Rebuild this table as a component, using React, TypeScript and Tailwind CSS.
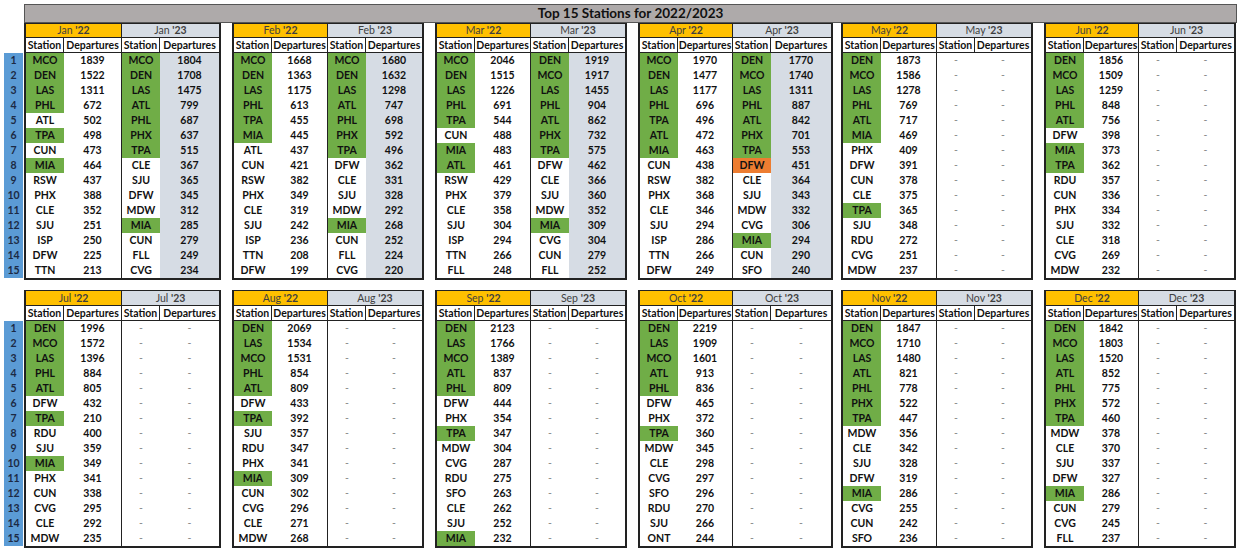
import React from "react";

const D: Record<string, string> = {
  Jan22: "MCO*1839 DEN*1522 LAS*1311 PHL*672 ATL502 TPA*498 CUN473 MIA*464 RSW437 PHX388 CLE352 SJU251 ISP250 DFW225 TTN213",
  Jan23: "MCO*1804 DEN*1708 LAS*1475 ATL*799 PHL*687 PHX*637 TPA*515 CLE367 SJU365 DFW345 MDW312 MIA*285 CUN279 FLL249 CVG234",
  Feb22: "MCO*1668 DEN*1363 LAS*1175 PHL*613 TPA*455 MIA*445 ATL437 CUN421 RSW382 PHX349 CLE319 SJU242 ISP236 TTN208 DFW199",
  Feb23: "MCO*1680 DEN*1632 LAS*1298 ATL*747 PHL*698 PHX*592 TPA*496 DFW362 CLE331 SJU328 MDW292 MIA*268 CUN252 FLL224 CVG220",
  Mar22: "MCO*2046 DEN*1515 LAS*1226 PHL*691 TPA*544 CUN488 MIA*483 ATL*461 RSW429 PHX379 CLE358 SJU304 ISP294 TTN266 FLL248",
  Mar23: "DEN*1919 MCO*1917 LAS*1455 PHL*904 ATL*862 PHX*732 TPA*575 DFW462 CLE366 SJU360 MDW352 MIA*309 CVG304 CUN279 FLL252",
  Apr22: "MCO*1970 DEN*1477 LAS*1177 PHL*696 TPA*496 ATL*472 MIA*463 CUN438 RSW382 PHX368 CLE346 SJU294 ISP286 TTN266 DFW249",
  Apr23: "DEN*1770 MCO*1740 LAS*1311 PHL*887 ATL*842 PHX*701 TPA*553 DFW!451 CLE364 SJU343 MDW332 CVG306 MIA*294 CUN290 SFO240",
  May22: "DEN*1873 MCO*1586 LAS*1278 PHL*769 ATL*717 MIA*469 PHX409 DFW391 CUN378 CLE375 TPA*365 SJU348 RDU272 CVG251 MDW237",
  Jun22: "DEN*1856 MCO*1509 LAS*1259 PHL*848 ATL*756 DFW398 MIA*373 TPA*362 RDU357 CUN336 PHX334 SJU332 CLE318 CVG269 MDW232",
  Jul22: "DEN*1996 MCO*1572 LAS*1396 PHL*884 ATL*805 DFW432 TPA*210 RDU400 SJU359 MIA*349 PHX341 CUN338 CVG295 CLE292 MDW235",
  Aug22: "DEN*2069 LAS*1534 MCO*1531 PHL*854 ATL*809 DFW433 TPA*392 SJU357 RDU347 PHX341 MIA*309 CUN302 CVG296 CLE271 MDW268",
  Sep22: "DEN*2123 LAS*1766 MCO*1389 ATL*837 PHL*809 DFW444 PHX354 TPA*347 MDW304 CVG287 RDU275 SFO263 CLE262 SJU252 MIA*232",
  Oct22: "DEN*2219 LAS*1909 MCO*1601 ATL*913 PHL*836 DFW465 PHX372 TPA*360 MDW345 CLE298 CVG297 SFO296 RDU270 SJU266 ONT244",
  Nov22: "DEN*1847 MCO*1710 LAS*1480 ATL*821 PHL*778 PHX*522 TPA*447 MDW356 CLE342 SJU328 DFW319 MIA*286 CVG255 CUN242 SFO236",
  Dec22: "DEN*1842 MCO*1803 LAS*1520 ATL*852 PHL*775 PHX*572 TPA*460 MDW378 CLE370 SJU337 DFW327 MIA*286 CUN279 CVG245 FLL237",
};

type Row = { code: string; mark: string; val: string };

const parse = (s?: string): Row[] | null =>
  s
    ? s.split(" ").map((t) => {
        const m = t.match(/^([A-Z]{3})([*!]?)(\d+)$/)!;
        return { code: m[1], mark: m[2], val: m[3] };
      })
    : null;

type Block = { m: string; w: string; ml: string; split: string };

const TOP: Block[] = [
  { m: "Jan", w: "w-[197px]", ml: "ml-[1px]", split: "w-[96px]" },
  { m: "Feb", w: "w-[192px]", ml: "ml-[11px]", split: "w-[94px]" },
  { m: "Mar", w: "w-[192px]", ml: "ml-[11px]", split: "w-[94px]" },
  { m: "Apr", w: "w-[195px]", ml: "ml-[11px]", split: "w-[93px]" },
  { m: "May", w: "w-[192px]", ml: "ml-[8px]", split: "w-[94px]" },
  { m: "Jun", w: "w-[192px]", ml: "ml-[11px]", split: "w-[93px]" },
];

const BOTTOM: Block[] = [
  { m: "Jul", w: "w-[197px]", ml: "ml-[1px]", split: "w-[96px]" },
  { m: "Aug", w: "w-[192px]", ml: "ml-[11px]", split: "w-[94px]" },
  { m: "Sep", w: "w-[192px]", ml: "ml-[11px]", split: "w-[94px]" },
  { m: "Oct", w: "w-[195px]", ml: "ml-[11px]", split: "w-[93px]" },
  { m: "Nov", w: "w-[192px]", ml: "ml-[8px]", split: "w-[94px]" },
  { m: "Dec", w: "w-[192px]", ml: "ml-[11px]", split: "w-[93px]" },
];

const LINE = "border-[#222222]";

function SubCol({
  month,
  year,
  rows,
  first,
  split,
  hh,
}: {
  month: string;
  year: string;
  rows: Row[] | null;
  first: boolean;
  split: string;
  hh: string;
}) {
  const is23 = year === "23";
  return (
    <div
      className={
        first
          ? `${split} shrink-0 flex flex-col border-r ${LINE}`
          : "flex-1 min-w-0 flex flex-col"
      }
    >
      <div
        className={`${hh} flex items-center justify-center border-b ${LINE} text-[#3f3f3f] ${
          is23 ? "bg-[#d6dce4]" : "bg-[#ffc000]"
        }`}
      >
        <span>{month}&nbsp;</span>
        <span className="font-bold">'{year}</span>
      </div>
      <div className={`h-[15px] flex border-b ${LINE} font-bold text-[#111]`}>
        <div className={`w-[38px] shrink-0 border-r ${LINE} flex items-center justify-center`}>
          Station
        </div>
        <div className="flex-1 flex items-center justify-center whitespace-nowrap overflow-hidden">
          Departures
        </div>
      </div>
      {rows
        ? rows.map((r, i) => (
            <div key={i} className="h-[15px] flex font-bold text-[#111]">
              <div
                className={`w-[38px] shrink-0 flex items-center justify-center ${
                  r.mark === "*" ? "bg-[#70ad47]" : r.mark === "!" ? "bg-[#ed7d31]" : ""
                }`}
              >
                {r.code}
              </div>
              <div
                className={`flex-1 flex items-center justify-center ${
                  is23 ? "bg-[#d6dce4]" : ""
                }`}
              >
                {r.val}
              </div>
            </div>
          ))
        : Array.from({ length: 15 }).map((_, i) => (
            <div key={i} className="h-[15px] flex text-[#8a8a8a]">
              <div className="w-[38px] shrink-0 flex items-center justify-center">-</div>
              <div className="flex-1 flex items-center justify-center">-</div>
            </div>
          ))}
    </div>
  );
}

function Section({ blocks, hh, spacer }: { blocks: Block[]; hh: string; spacer: string }) {
  return (
    <div className="flex pl-[4px]">
      <div className={`w-[19px] shrink-0 ${spacer}`}>
        {Array.from({ length: 15 }).map((_, i) => (
          <div
            key={i}
            className="h-[15px] bg-[#5b9bd5] flex items-center justify-center font-bold text-[#1c2a44]"
          >
            {i + 1}
          </div>
        ))}
      </div>
      {blocks.map((b) => (
        <div
          key={b.m}
          className={`${b.w} ${b.ml} shrink-0 flex border-t border-x-2 border-b-2 ${LINE} bg-white`}
        >
          <SubCol month={b.m} year="22" rows={parse(D[b.m + "22"])} first split={b.split} hh={hh} />
          <SubCol month={b.m} year="23" rows={parse(D[b.m + "23"])} first={false} split={b.split} hh={hh} />
        </div>
      ))}
    </div>
  );
}

export default function App() {
  return (
    <div className="w-[1240px] h-[549px] bg-white overflow-hidden font-[Lato,sans-serif] text-[10.5px] leading-none text-black">
      <div className="pt-[4px]">
        <div className="ml-[24px] w-[1213px] h-[19px] bg-[#aeaaaa] border border-[#555555] flex items-center justify-center font-bold text-[13.5px] text-[#111]">
          Top 15 Stations for 2022/2023
        </div>
      </div>
      <Section blocks={TOP} hh="h-[14px]" spacer="mt-[30px]" />
      <div className="mt-[10px]">
        <Section blocks={BOTTOM} hh="h-[15px]" spacer="mt-[31px]" />
      </div>
    </div>
  );
}
